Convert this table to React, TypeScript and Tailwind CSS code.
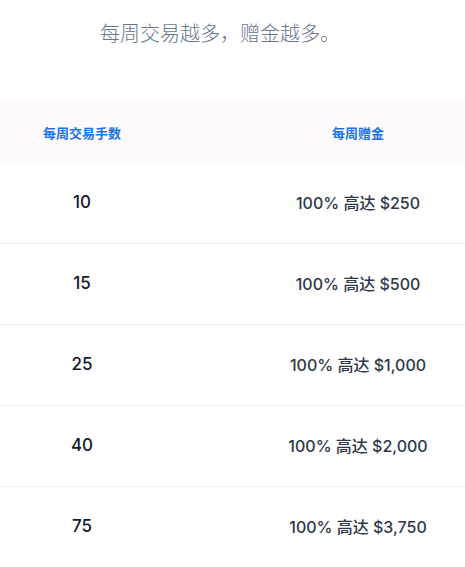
const rows = [
  { lots: '10', bonus: '$250' },
  { lots: '15', bonus: '$500' },
  { lots: '25', bonus: '$1,000' },
  { lots: '40', bonus: '$2,000' },
  { lots: '75', bonus: '$3,750' },
]

export default function App() {
  return (
    <div className="w-[465px] h-[567px] overflow-hidden bg-white font-['Inter','Noto_Sans_CJK_SC',sans-serif]">
      {/* Intro */}
      <div className="pt-[19px] pl-[100px] h-[102px]">
        <p className="text-[20px] leading-[28px] text-[#66758e] font-['Noto_Sans_CJK_SC',sans-serif] font-light">
          每周交易越多，赠金越多。
        </p>
      </div>

      {/* Table */}
      <div className="w-[552px]">
        <div className="grid grid-cols-[164px_388px] h-[61px] bg-[#fefafe] items-center text-[13px] font-bold text-[#1a73e8] font-['Noto_Sans_CJK_SC',sans-serif]">
          <div className="text-center">每周交易手数</div>
          <div className="text-center">每周赠金</div>
        </div>
        {rows.map((r) => (
          <div
            key={r.lots}
            className="grid grid-cols-[164px_388px] h-[81px] items-center border-b border-[#f1f1f3]"
          >
            <div className="text-center text-[17px] font-medium text-[#141a2b]">{r.lots}</div>
            <div className="text-center text-[16px] font-medium text-[#2d3748]">
              100% 高达 {r.bonus}
            </div>
          </div>
        ))}
      </div>
    </div>
  )
}
